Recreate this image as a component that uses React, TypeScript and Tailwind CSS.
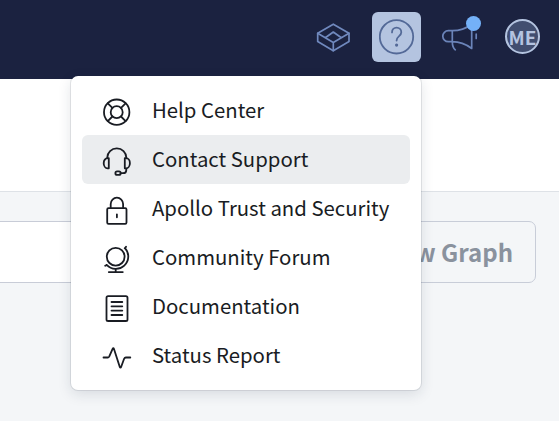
import type { ReactNode } from "react";

const GraphIcon = () => (
  <svg width="36" height="32" viewBox="0 0 36 32" fill="none" stroke="#7089be" strokeWidth="1.700" strokeLinejoin="round" strokeLinecap="round">
    <path d="M18.300 3.200 34 12.300v8.200L18.300 29.700 2.700 20.500v-8.200z" />
    <path d="M2.700 12.300 18.300 21.400 34 12.300M18.300 21.400V29.700M10.300 16.700 18.300 11 26.300 16.700" />
  </svg>
);

const QuestionIcon = () => (
  <svg width="36" height="36" viewBox="0 0 36 36" fill="none" stroke="#536997" strokeWidth="1.800" strokeLinecap="round">
    <circle cx="17.500" cy="17.800" r="16.700" />
    <path d="M13 13.400c0-2.800 2-4.700 4.600-4.700s4.700 1.900 4.700 4.600c0 4-4.700 3.700-4.700 8.300" />
    <circle cx="17.600" cy="26.100" r="1.600" fill="#536997" stroke="none" />
  </svg>
);

const MegaphoneIcon = () => (
  <svg width="40" height="40" viewBox="0 0 40 40" fill="none" stroke="#6b84b9" strokeWidth="1.700" strokeLinejoin="round" strokeLinecap="round">
    <path d="M11.300 13.700h-4a5.500 5.500 0 0 0 0 11h4zM11.300 13.700c8 0 13.500-2 19.400-6.500v24.300c-6-4.500-11.400-6.800-19.400-6.800M11.300 24.700c0 4 .8 6.300 3 8.100M35.200 17.200v4.300" />
  </svg>
);

const Icon = ({ children }: { children: ReactNode }) => (
  <svg width="30" height="32" viewBox="0 0 30 32" fill="none" stroke="#191c23" strokeWidth="1.800" strokeLinecap="round" strokeLinejoin="round" className="shrink-0">
    {children}
  </svg>
);

const items: { label: string; icon: ReactNode; active?: boolean }[] = [
  {
    label: "Help Center",
    icon: (
      <>
        <circle cx="14.700" cy="17.200" r="12.700" />
        <circle cx="14.700" cy="17.200" r="6" />
        <path d="m5.800 8.300 4.600 4.600M23.600 8.300 19 12.900M5.800 26.100l4.600-4.600M23.600 26.100 19 21.500" />
      </>
    ),
  },
  {
    label: "Contact Support",
    active: true,
    icon: (
      <>
        <path d="M5.300 14.300v-.7c0-5.200 4.200-9.200 9.500-9.200s9.500 4 9.500 9.200v.7" />
        <path d="M6.800 14.200h-1.200c-2.200 0-3.900 2.200-3.900 5s1.700 5.100 3.900 5.100h1.200zM22.800 14.200H24c2.200 0 3.900 2.200 3.900 5s-1.700 5.100-3.900 5.100h-1.200zM24.300 24.300v1.600c0 2-1.200 3.300-3.200 3.300h-2.600" />
        <rect x="13.400" y="27.300" width="5.300" height="3.600" rx="1.700" />
      </>
    ),
  },
  {
    label: "Apollo Trust and Security",
    icon: (
      <g transform="translate(0 1.500)">
        <rect x="5.200" y="13.600" width="19.300" height="15.700" rx="1.300" />
        <path d="M8.700 13.300V9.400a6.200 6.200 0 0 1 12.400 0v3.900M14.900 19.800v3" />
      </g>
    ),
  },
  {
    label: "Community Forum",
    icon: (
      <g transform="translate(0 2.500)">
        <circle cx="13.700" cy="12.200" r="8.900" />
        <path d="M23 3.600a12.400 12.400 0 0 1-18.300 16.800M22.700 3.800l1.300-1.500M4.700 20.400l-1.500.9M13.700 24.400v3.200M6.800 27.600h14" />
      </g>
    ),
  },
  {
    label: "Documentation",
    icon: (
      <>
        <rect x="4.500" y="5.200" width="21" height="24.800" rx="1.600" />
        <path d="M9.500 11h10.800M9.500 15.300h10.800M9.500 19.600h10.800M9.500 24h10.800" />
      </>
    ),
  },
  {
    label: "Status Report",
    icon: <path d="M1.500 17.500h4.200c1 0 1.200-.4 1.600-1.200l3.300-7.500c.4-.8 1-.8 1.300 0L17.800 27c.3.900 1 .9 1.300 0l3-8.200c.4-.9.800-1.300 1.700-1.300h4.500" />,
  },
];

export default function App() {
  return (
    <div className="relative h-[421px] w-[559px] overflow-hidden bg-[#f4f6f8] font-['Noto_Sans_CJK_SC',sans-serif]">
      <header className="flex h-[79px] items-start bg-[#1b2240] pt-[12px] pl-[315px]">
        <div className="mt-[9px]"><GraphIcon /></div>
        <div className="ml-[21px] flex h-[50px] w-[49px] items-center justify-center rounded-[6px] bg-[#b4c4e0]">
          <QuestionIcon />
        </div>
        <div className="relative mt-[5px] ml-[20px]">
          <MegaphoneIcon />
          <span className="absolute top-[-1px] left-[25px] size-[15px] rounded-full bg-[#74b1f8]" />
        </div>
        <div className="mt-[7px] ml-[24px] flex size-[35px] items-center justify-center rounded-full border-2 border-[#b4c4e0] bg-[#414e70] pb-px text-[19px] leading-none font-bold text-[#b4c4e0]">
          ME
        </div>
      </header>
      <section className="h-[113px] border-b border-[#dee2e7] bg-white" />
      <div className="mt-[29px] flex h-[62px]">
        <div className="w-[300px] border-y border-[#c8ccd7] bg-white" />
        <button className="flex w-[236px] items-center justify-end rounded-[7px] border-[1.5px] border-[#c8cdd8] pr-[22px] text-[24px] font-bold text-[#8a929e]">
          New Graph
        </button>
      </div>
      <nav className="absolute top-[76px] left-[71px] h-[314px] w-[350px] rounded-[7px] bg-white px-[11px] pt-[10px] shadow-[0_0_0_1px_rgba(25,40,60,0.10),0_4px_14px_rgba(25,40,60,0.13)]">
        {items.map((item) => (
          <a key={item.label} className={`flex h-[49px] items-center rounded-[6px] pl-[20px] ${item.active ? "bg-[#ebedef]" : ""}`}>
            <Icon>{item.icon}</Icon>
            <span className="ml-[20px] pb-[2px] text-[20.35px] leading-none whitespace-nowrap text-[#191c23]">{item.label}</span>
          </a>
        ))}
      </nav>
    </div>
  );
}
